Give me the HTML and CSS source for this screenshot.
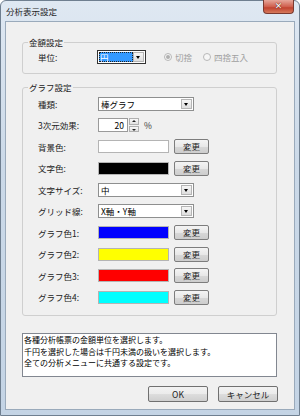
FILE: index.html
```
<!DOCTYPE html>
<html lang="ja">
<head>
    <meta charset="UTF-8">
    <title>分析表示設定</title>
    <link rel="stylesheet" href="styles.css">
</head>
<body>
    <div class="window">
        <div class="titlebar">分析表示設定</div>
        <div class="close-btn"><span>✕</span></div>

        <div class="client">
            <fieldset class="group group-money">
                <legend>金額設定</legend>
                <div class="row">
                    <span class="label">単位:</span>
                    <div class="combo combo-small focused">
                        <span class="value"><span class="sel">円</span></span>
                        <span class="arrow"></span>
                    </div>
                    <label class="radio checked"><span class="dotc"></span>切捨</label>
                    <label class="radio"><span class="dotc"></span>四捨五入</label>
                </div>
            </fieldset>

            <fieldset class="group group-graph">
                <legend>グラフ設定</legend>
                <div class="grid">
                    <span class="label">種類:</span>
                    <div class="cell">
                        <div class="combo"><span class="value">棒グラフ</span><span class="arrow"></span></div>
                    </div>

                    <span class="label">3次元効果:</span>
                    <div class="cell">
                        <div class="spin-input">20</div>
                        <div class="spin-btns">
                            <span class="up"></span>
                            <span class="down"></span>
                        </div>
                        <span class="unit">%</span>
                    </div>

                    <span class="label">背景色:</span>
                    <div class="cell">
                        <span class="swatch" style="background:#ffffff"></span>
                        <button class="btn-small">変更</button>
                    </div>

                    <span class="label">文字色:</span>
                    <div class="cell">
                        <span class="swatch" style="background:#000000"></span>
                        <button class="btn-small">変更</button>
                    </div>

                    <span class="label">文字サイズ:</span>
                    <div class="cell">
                        <div class="combo"><span class="value">中</span><span class="arrow"></span></div>
                    </div>

                    <span class="label">グリッド線:</span>
                    <div class="cell">
                        <div class="combo"><span class="value">X軸・Y軸</span><span class="arrow"></span></div>
                    </div>

                    <span class="label">グラフ色1:</span>
                    <div class="cell">
                        <span class="swatch" style="background:#0000ff"></span>
                        <button class="btn-small">変更</button>
                    </div>

                    <span class="label">グラフ色2:</span>
                    <div class="cell">
                        <span class="swatch" style="background:#ffff00"></span>
                        <button class="btn-small">変更</button>
                    </div>

                    <span class="label">グラフ色3:</span>
                    <div class="cell">
                        <span class="swatch" style="background:#ff0000"></span>
                        <button class="btn-small">変更</button>
                    </div>

                    <span class="label">グラフ色4:</span>
                    <div class="cell">
                        <span class="swatch" style="background:#00ffff"></span>
                        <button class="btn-small">変更</button>
                    </div>
                </div>
            </fieldset>

            <div class="description">
                <p>各種分析帳票の金額単位を選択します。</p>
                <p>千円を選択した場合は千円未満の扱いを選択します。</p>
                <p>全ての分析メニューに共通する設定です。</p>
            </div>

            <div class="actions">
                <button class="btn">OK</button>
                <button class="btn">キャンセル</button>
            </div>
        </div>
    </div>
</body>
</html>
```

FILE: styles.css
```
* {
    margin: 0;
    padding: 0;
    box-sizing: border-box;
}

body {
    font-family: "Noto Sans CJK JP", "Noto Sans", sans-serif;
    font-size: 8.5px;
    color: #1a1a1a;
    background: #ffffff;
}

.window {
    position: relative;
    width: 300px;
    height: 416px;
    border: 1px solid #6f7f90;
    border-radius: 6px 6px 0 0;
    background: linear-gradient(180deg, #dfe8f2 0%, #cbd9e8 40%, #c4d4e5 100%);
    padding: 0 4px 5px;
    display: flex;
    flex-direction: column;
}

.titlebar {
    height: 20px;
    line-height: 20px;
    padding-left: 1px;
    color: #1e1e1e;
}

/* close button sits over the frame */
.close-btn {
    position: absolute;
    top: -1px;
    left: 262px;
    width: 31px;
    height: 14px;
    border: 1px solid #7a3a30;
    border-top: none;
    border-radius: 0 0 4px 4px;
    background: linear-gradient(180deg, #e6a79a 0%, #d0614f 50%, #c14330 60%, #d67a5c 100%);
    display: flex;
    justify-content: center;
    align-items: center;
}

.close-btn span {
    color: #ffffff;
    font-family: "DejaVu Sans", sans-serif;
    font-size: 9px;
    font-weight: bold;
    text-shadow: 0 0 1px #5a1a10, 0 0 1px #5a1a10;
    line-height: 1;
}

.client {
    flex: 1;
    background: #f0f0f0;
    border: 1px solid #9aaabb;
    padding: 14px 17px 0 16px;
}

.group {
    border: 1px solid #cfcfcf;
    border-radius: 3px;
    padding: 0;
    min-width: 0;
}

.group legend {
    margin-left: 5px;
    padding: 0 1px;
    line-height: 12px;
    color: #1a1a1a;
}

.group-money {
    padding: 1px 0 8px 0;
}

.group-graph {
    margin-top: 7px;
    padding: 0 0 7px 0;
}

.row {
    display: flex;
    align-items: center;
    height: 16px;
    padding-left: 15px;
}

.label {
    width: 60px;
    color: #222222;
}

.row .label {
    width: 59px;
}

.grid {
    display: grid;
    grid-template-columns: 60px 1fr;
    grid-auto-rows: 21.5px;
    align-items: center;
    padding-left: 15px;
}

.cell {
    display: flex;
    align-items: center;
}

/* combobox */
.combo {
    width: 96px;
    height: 14px;
    border: 1px solid #8e8f8f;
    background: #ffffff;
    display: flex;
    align-items: stretch;
    padding: 1px;
}

.combo .value {
    flex: 1;
    line-height: 10px;
    padding-left: 1px;
    color: #000000;
}

.combo .arrow {
    width: 11px;
    border: 1px solid #b5b5b5;
    background: linear-gradient(180deg, #f6f6f6, #dedede);
    position: relative;
}

.combo .arrow::after {
    content: '';
    position: absolute;
    left: 2px;
    top: 3px;
    border-left: 2.5px solid transparent;
    border-right: 2.5px solid transparent;
    border-top: 3px solid #000000;
}

.combo-small {
    width: 49px;
    margin-right: 18px;
}

.combo.focused {
    border-color: #333333;
}

.combo .sel {
    display: block;
    height: 100%;
    background: #3399ff;
    color: #ffffff;
    outline: 1px dotted #222222;
    outline-offset: -1px;
    padding-left: 1px;
}

.combo.focused .value {
    padding-left: 0;
}

/* disabled radios */
.radio {
    display: flex;
    align-items: center;
    color: #a0a0a0;
    margin-right: 11px;
}

.dotc {
    width: 8px;
    height: 8px;
    border-radius: 50%;
    border: 1px solid #b8b8b8;
    background: #f6f6f6;
    margin-right: 3px;
    position: relative;
}

.radio.checked .dotc::after {
    content: '';
    position: absolute;
    left: 1px;
    top: 1px;
    width: 4px;
    height: 4px;
    border-radius: 50%;
    background: #b0b0b0;
}

/* spin box */
.spin-input {
    width: 30px;
    height: 14px;
    border: 1px solid #9a9a9a;
    background: #ffffff;
    text-align: right;
    padding-right: 3px;
    line-height: 12px;
    color: #000000;
}

.spin-btns {
    width: 10px;
    height: 14px;
    margin-left: 1px;
    display: flex;
    flex-direction: column;
    gap: 1px;
}

.spin-btns span {
    flex: 1;
    border: 1px solid #b0b0b0;
    background: linear-gradient(180deg, #f8f8f8, #e2e2e2);
    position: relative;
}

.spin-btns .up::after,
.spin-btns .down::after {
    content: '';
    position: absolute;
    left: 2px;
    border-left: 2px solid transparent;
    border-right: 2px solid transparent;
}

.spin-btns .up::after {
    top: 1px;
    border-bottom: 2px solid #222222;
}

.spin-btns .down::after {
    top: 2px;
    border-top: 2px solid #222222;
}

.unit {
    margin-left: 5px;
    color: #333333;
}

/* colour swatch + change button */
.swatch {
    display: block;
    width: 71px;
    height: 13px;
    border: 1px solid #b4b4b4;
}

.btn-small {
    width: 35px;
    height: 15px;
    margin-left: 5px;
    font-family: inherit;
    font-size: 8.5px;
    color: #1a1a1a;
    border: 1px solid #7d7d7d;
    border-radius: 2px;
    background: linear-gradient(180deg, #f4f4f4 0%, #e8e8e8 50%, #d8d8d8 51%, #cdcdcd 100%);
    line-height: 11px;
}

.description {
    margin-top: 17px;
    height: 44px;
    border: 1px solid #828790;
    background: #ffffff;
    padding: 0 1px;
    color: #000000;
    font-size: 8px;
}

.description p {
    line-height: 11.7px;
}

.actions {
    display: flex;
    justify-content: flex-end;
    gap: 10px;
    margin-top: 9px;
    margin-right: -1px;
}

.btn {
    width: 60px;
    height: 16px;
    font-family: inherit;
    font-size: 8.5px;
    color: #1a1a1a;
    border: 1px solid #707070;
    border-radius: 2px;
    background: linear-gradient(180deg, #f2f2f2 0%, #ebebeb 50%, #dddddd 51%, #cfcfcf 100%);
}
```
